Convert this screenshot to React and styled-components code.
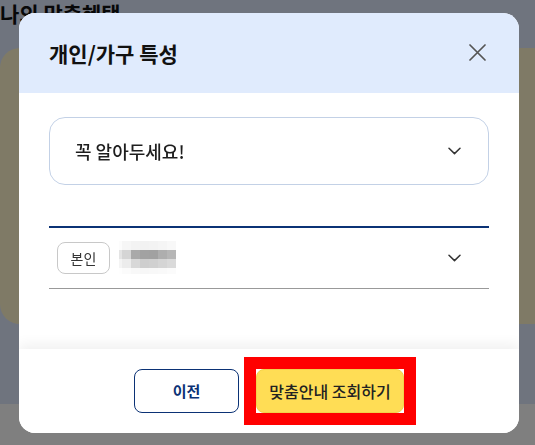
import React from 'react';
import styled, { createGlobalStyle } from 'styled-components';

const GlobalStyle = createGlobalStyle`
  html, body {
    margin: 0;
    padding: 0;
  }
  body {
    font-family: "Noto Sans CJK KR", "Noto Sans", sans-serif;
    overflow: hidden;
  }
`;

const Page = styled.div`
  width: 535px;
  height: 445px;
  background: #dee8fd;
  display: flex;
  flex-direction: column;
  overflow: hidden;
`;

const PageTitle = styled.h1`
  margin: -2px 0 0 0;
  height: 50px;
  font-size: 21px;
  line-height: 30px;
  font-weight: 700;
  color: #111;
`;

const BackCard = styled.div`
  height: 276px;
  margin-right: -30px;
  background: #fff5cc;
  border-radius: 20px;
`;

const Spacer = styled.div`
  height: 80px;
`;

const WhiteArea = styled.div`
  flex: 1;
  background: #fff;
`;

const Overlay = styled.div`
  position: fixed;
  inset: 0;
  background: rgba(0, 0, 0, 0.5);
  display: flex;
  align-items: center;
  padding-left: 19px;
`;

const Modal = styled.div`
  width: 500px;
  height: 420px;
  background: #fff;
  border-radius: 16px;
  overflow: hidden;
  display: flex;
  flex-direction: column;
`;

const Header = styled.div`
  height: 80px;
  flex-shrink: 0;
  background: #e0ebfd;
  display: flex;
  align-items: center;
  justify-content: space-between;
  padding: 0 32px 0 30px;
`;

const Title = styled.h2`
  margin: 0;
  font-size: 21px;
  font-weight: 700;
  color: #111;
`;

const CloseButton = styled.button`
  width: 20px;
  height: 20px;
  padding: 0;
  border: none;
  background: none;
  display: flex;
  align-items: center;
  justify-content: center;
  color: #555;
  cursor: pointer;
`;

const Body = styled.div`
  flex: 1;
  padding: 24px 30px 0;
`;

const Accordion = styled.div`
  height: 68px;
  box-sizing: border-box;
  border: 1px solid #c3d1e6;
  border-radius: 16px;
  display: flex;
  align-items: center;
  justify-content: space-between;
  padding: 0 26px 0 25px;
`;

const AccordionLabel = styled.span`
  font-size: 18px;
  font-weight: 500;
  color: #1e1e1e;
`;

const Chevron = styled.span`
  width: 16px;
  height: 16px;
  display: flex;
  align-items: center;
  justify-content: center;
  color: #333;
`;

const PersonList = styled.div`
  margin-top: 41px;
  border-top: 2px solid #0b3275;
  border-bottom: 1px solid #999;
`;

const PersonRow = styled.div`
  height: 60px;
  display: flex;
  align-items: center;
  padding: 0 27px 0 8px;
`;

const Tag = styled.span`
  width: 53px;
  height: 32px;
  box-sizing: border-box;
  border: 1px solid #c8c8c8;
  border-radius: 8px;
  display: flex;
  align-items: center;
  justify-content: center;
  font-size: 14px;
  color: #333;
`;

const NameBox = styled.div`
  flex: 1;
  margin-left: 9px;
  display: flex;
  align-items: center;
`;

const Mosaic = styled.div`
  display: grid;
  grid-template-columns: 3px repeat(6, 9px);
  grid-template-rows: 9px 9px 9px 6px;
  margin-top: -1px;
`;

const Cell = styled.span`
  background: ${p => p.$c};
`;

const Footer = styled.div`
  height: 84px;
  flex-shrink: 0;
  background: #fff;
  position: relative;
  box-shadow: 0 -5px 12px rgba(0, 0, 0, 0.06);
  display: flex;
  align-items: center;
  justify-content: center;
  gap: 17px;
`;

const Button = styled.button`
  height: 44px;
  box-sizing: border-box;
  border-radius: 8px;
  font-family: "Noto Sans CJK KR", "Noto Sans", sans-serif;
  cursor: pointer;
  padding: 0;
`;

const PrevButton = styled(Button)`
  width: 105px;
  border: 1px solid #0b3275;
  background: #fff;
  color: #0b3275;
  font-size: 15px;
  font-weight: 700;
`;

const SubmitButton = styled(Button)`
  width: 148px;
  border: 1px solid #f2d24a;
  background: #ffdd55;
  color: #222;
  font-size: 16px;
  font-weight: 500;
`;

const Highlight = styled.span`
  display: inline-flex;
  outline: 12px solid #ff0000;
  outline-offset: 0;
`;

const mosaic = [
  ['#fcfcfc', '#f6f6f6', '#f3f3f3', '#f2f2f2', '#f3f3f3', '#f5f5f5', '#f8f8f8'],
  ['#e4e4e4', '#d5d5d5', '#a9a9a9', '#a2a2a2', '#a1a1a1', '#aeaeae', '#b6b6b6'],
  ['#f4f4f4', '#ececec', '#d8d8d8', '#cecece', '#d0d0d0', '#d5d5d5', '#dadada'],
  ['#fefefe', '#fbfbfb', '#f8f8f8', '#f7f7f7', '#f8f8f8', '#f9f9f9', '#fbfbfb'],
];

function ChevronDown() {
  return (
    <svg width="13" height="8" viewBox="0 0 13 8" fill="none">
      <path d="M1 1.2L6.5 6.6L12 1.2" stroke="currentColor" strokeWidth="1.5" strokeLinecap="round" strokeLinejoin="round" />
    </svg>
  );
}

export default function App() {
  return (
    <>
      <GlobalStyle />
      <Page>
        <PageTitle>나의 맞춤혜택</PageTitle>
        <BackCard />
        <Spacer />
        <WhiteArea />
      </Page>
      <Overlay>
        <Modal>
          <Header>
            <Title>개인/가구 특성</Title>
            <CloseButton aria-label="닫기">
              <svg width="17" height="17" viewBox="0 0 17 17" fill="none">
                <path d="M1 1L16 16M16 1L1 16" stroke="currentColor" strokeWidth="1.7" strokeLinecap="round" />
              </svg>
            </CloseButton>
          </Header>
          <Body>
            <Accordion>
              <AccordionLabel>꼭 알아두세요!</AccordionLabel>
              <Chevron><ChevronDown /></Chevron>
            </Accordion>
            <PersonList>
              <PersonRow>
                <Tag>본인</Tag>
                <NameBox>
                  <Mosaic>
                    {mosaic.flat().map((c, i) => <Cell key={i} $c={c} />)}
                  </Mosaic>
                </NameBox>
                <Chevron><ChevronDown /></Chevron>
              </PersonRow>
            </PersonList>
          </Body>
          <Footer>
            <PrevButton>이전</PrevButton>
            <Highlight>
              <SubmitButton>맞춤안내 조회하기</SubmitButton>
            </Highlight>
          </Footer>
        </Modal>
      </Overlay>
    </>
  );
}
